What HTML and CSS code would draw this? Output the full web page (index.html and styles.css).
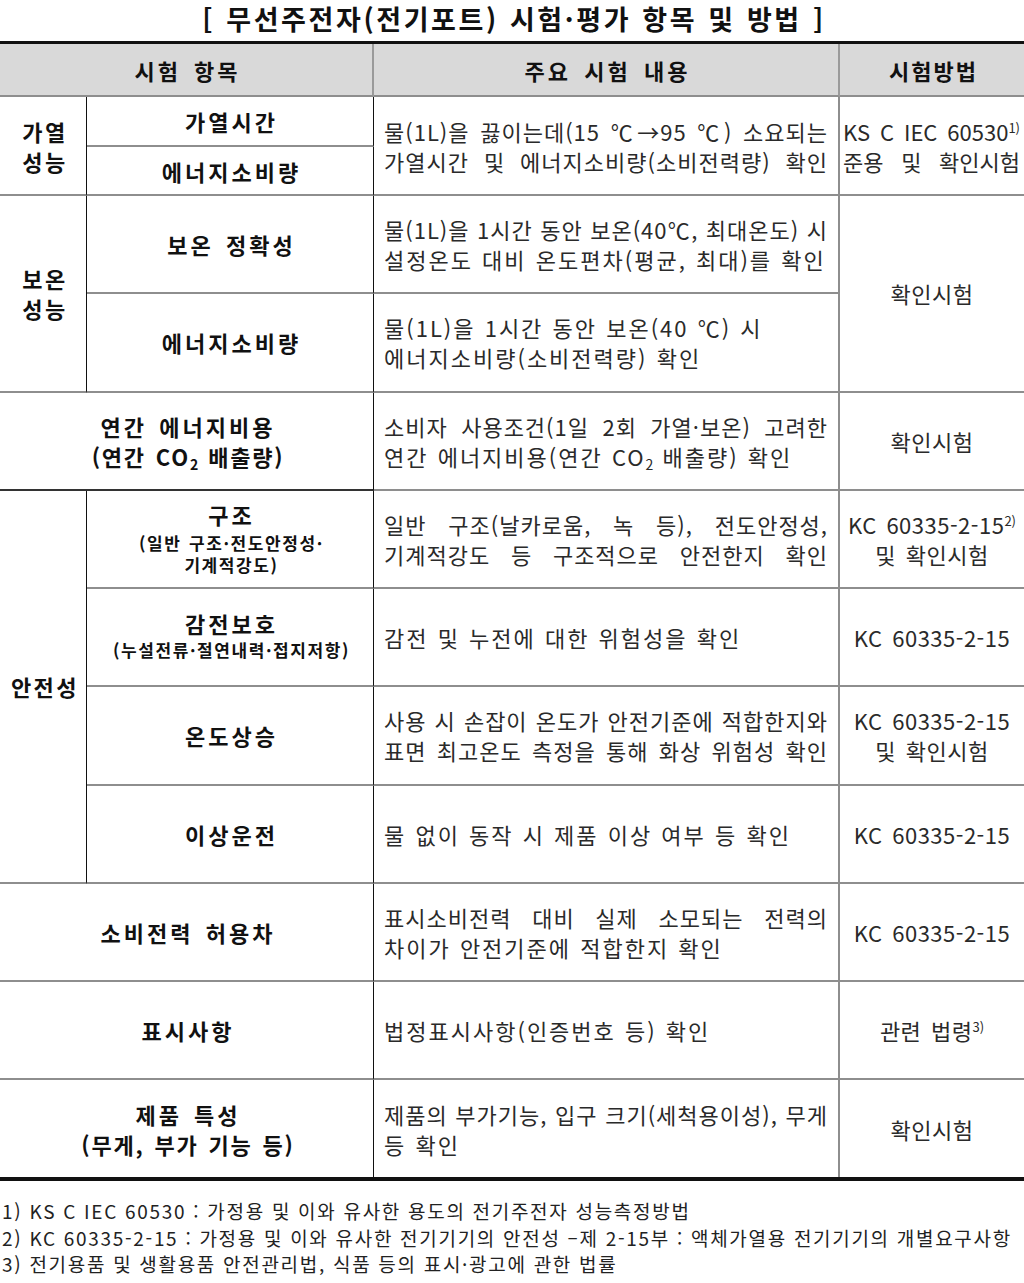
FILE: index.html
```html
<!DOCTYPE html>
<html lang="ko">
<head>
<meta charset="utf-8">
<title>무선주전자 시험·평가 항목 및 방법</title>
<link rel="stylesheet" href="styles.css">
</head>
<body>
<h1 class="title">[ 무선주전자(전기포트) 시험·평가 항목 및 방법 ]</h1>
<table class="tbl">
  <colgroup>
    <col class="c1"><col class="c2"><col class="c3"><col class="c4">
  </colgroup>
  <thead>
    <tr class="hrow">
      <th colspan="2" class="h-item">시험 항목</th>
      <th class="h-desc">주요 시험 내용</th>
      <th class="h-meth">시험방법</th>
    </tr>
  </thead>
  <tbody>
    <tr class="r-half1">
      <td rowspan="2" class="cat">가열<br>성능</td>
      <td class="item">가열시간</td>
      <td rowspan="2" class="desc"><span class="jl">물(1L)을 끓이는데(15 ℃→95 ℃) 소요되는</span><span class="jl">가열시간 및 에너지소비량(소비전력량) 확인</span></td>
      <td rowspan="2" class="meth left"><span class="jl">KS C IEC 60530<sup>1)</sup></span><span class="jl">준용 및 확인시험</span></td>
    </tr>
    <tr class="r-half2">
      <td class="item">에너지소비량</td>
    </tr>
    <tr class="r-full">
      <td rowspan="2" class="cat">보온<br>성능</td>
      <td class="item">보온 정확성</td>
      <td class="desc"><span class="jl">물(1L)을 1시간 동안 보온(40℃, 최대온도) 시</span>설정온도 대비 온도편차(평균, 최대)를 확인</td>
      <td rowspan="2" class="meth">확인시험</td>
    </tr>
    <tr class="r-full">
      <td class="item">에너지소비량</td>
      <td class="desc">물(1L)을 1시간 동안 보온(40 ℃) 시<br>에너지소비량(소비전력량) 확인</td>
    </tr>
    <tr class="r-full">
      <td colspan="2" class="item wide dark-bottom">연간 에너지비용<br><span class="paren">(연간 CO<sub>2</sub> 배출량)</span></td>
      <td class="desc"><span class="jl">소비자 사용조건(1일 2회 가열·보온) 고려한</span>연간 에너지비용(연간 CO<sub>2</sub> 배출량) 확인</td>
      <td class="meth">확인시험</td>
    </tr>
    <tr class="r-full">
      <td rowspan="4" class="cat">안전성</td>
      <td class="item stack s-two"><span class="main m-gap">구조</span><span class="sub">(일반 구조·전도안정성·</span><span class="sub">기계적강도)</span></td>
      <td class="desc"><span class="jl">일반 구조(날카로움, 녹 등), 전도안정성,</span><span class="jl">기계적강도 등 구조적으로 안전한지 확인</span></td>
      <td class="meth">KC 60335-2-15<sup>2)</sup><br>및 확인시험</td>
    </tr>
    <tr class="r-full">
      <td class="item stack"><span class="main">감전보호</span><span class="sub">(누설전류·절연내력·접지저항)</span></td>
      <td class="desc">감전 및 누전에 대한 위험성을 확인</td>
      <td class="meth">KC 60335-2-15</td>
    </tr>
    <tr class="r-full">
      <td class="item">온도상승</td>
      <td class="desc"><span class="jl">사용 시 손잡이 온도가 안전기준에 적합한지와</span><span class="jl">표면 최고온도 측정을 통해 화상 위험성 확인</span></td>
      <td class="meth">KC 60335-2-15<br>및 확인시험</td>
    </tr>
    <tr class="r-full">
      <td class="item">이상운전</td>
      <td class="desc">물 없이 동작 시 제품 이상 여부 등 확인</td>
      <td class="meth">KC 60335-2-15</td>
    </tr>
    <tr class="r-full">
      <td colspan="2" class="item wide">소비전력 허용차</td>
      <td class="desc"><span class="jl">표시소비전력 대비 실제 소모되는 전력의</span>차이가 안전기준에 적합한지 확인</td>
      <td class="meth">KC 60335-2-15</td>
    </tr>
    <tr class="r-full">
      <td colspan="2" class="item wide">표시사항</td>
      <td class="desc">법정표시사항(인증번호 등) 확인</td>
      <td class="meth">관련 법령<sup>3)</sup></td>
    </tr>
    <tr class="r-last">
      <td colspan="2" class="item wide">제품 특성<br><span class="paren">(무게, 부가 기능 등)</span></td>
      <td class="desc"><span class="jl">제품의 부가기능, 입구 크기(세척용이성), 무게</span>등 확인</td>
      <td class="meth">확인시험</td>
    </tr>
  </tbody>
</table>
<ol class="notes">
  <li>1) KS C IEC 60530 : 가정용 및 이와 유사한 용도의 전기주전자 성능측정방법</li>
  <li>2) KC 60335-2-15 : 가정용 및 이와 유사한 전기기기의 안전성 –제 2-15부 : 액체가열용 전기기기의 개별요구사항</li>
  <li>3) 전기용품 및 생활용품 안전관리법, 식품 등의 표시·광고에 관한 법률</li>
</ol>
</body>
</html>
```
FILE: styles.css
```css
html, body {
  margin: 0;
  padding: 0;
  background: #ffffff;
}
body {
  width: 1024px;
  font-family: "Noto Sans CJK KR", "Noto Sans", sans-serif;
  color: #222;
}
.title {
  margin: 0;
  height: 41px;
  line-height: 37px;
  font-size: 27px;
  font-weight: 700;
  letter-spacing: 2.6px;
  word-spacing: 1px;
  text-align: center;
  color: #111;
  padding-left: 4px;
}
.tbl {
  width: 1024px;
  table-layout: fixed;
  border-collapse: separate;
  border-spacing: 0;
  border-top: 3px solid #111;
  border-bottom: 4px solid #111;
}
.c1 { width: 87px; }
.c2 { width: 287px; }
.c3 { width: 466px; }
.c4 { width: 184px; }

.tbl th, .tbl td {
  padding: 0;
  vertical-align: middle;
  text-align: center;
  border-bottom: 2px solid #8e8e8e;
  box-sizing: border-box;
}
.tbl tr.r-last td { border-bottom: none; }

.hrow { height: 53px; }
.hrow th {
  background: #d9d9d9;
  font-size: 22px;
  font-weight: 700;
  letter-spacing: 3px;
  word-spacing: 4px;
  color: #111;
  padding-left: 3px;
  border-right: 2px solid #9a9a9a;
}
.hrow th.h-meth { border-right: none; letter-spacing: 2px; }

.r-half1 { height: 50px; }
.r-half2 { height: 49px; }
.r-full { height: 98.25px; }
.r-last { height: 97px; }

.tbl td.cat {
  font-size: 22px;
  font-weight: 700;
  line-height: 30px;
  letter-spacing: 2.5px;
  padding-left: 4px;
  color: #111;
  border-right: 1px solid #111;
}
.tbl td.item {
  font-size: 22px;
  font-weight: 700;
  line-height: 30px;
  letter-spacing: 3px;
  word-spacing: 3px;
  padding-left: 3px;
  color: #111;
  border-right: 1px solid #111;
}
.item .paren {
  letter-spacing: 1.8px;
  word-spacing: 2px;
}
.tbl td.item.dark-bottom { border-bottom: 2px solid #333; }
.tbl td.item.stack { padding-bottom: 4px; }
.tbl td.item.stack.s-two { padding-bottom: 2px; }
.item .main {
  display: block;
  line-height: 28px;
  margin-bottom: 2px;
}
.item .main.m-gap { margin-bottom: 4px; }
.item .sub {
  display: block;
  font-size: 17px;
  line-height: 22px;
  letter-spacing: 1.6px;
  word-spacing: 1px;
}
.tbl td.desc {
  text-align: left;
  padding: 0 10px 0 10px;
  font-size: 22px;
  line-height: 30px;
  letter-spacing: 2px;
  word-spacing: 1px;
  color: #2a2a2a;
  border-right: 2px solid #8e8e8e;
}
.jl {
  display: block;
  white-space: nowrap;
  text-align: justify;
  text-align-last: justify;
}
.tbl td.desc .jl {
  letter-spacing: 1px;
  word-spacing: 0;
}
.tbl td.meth {
  font-size: 22px;
  line-height: 30px;
  letter-spacing: 0.5px;
  word-spacing: 3px;
  color: #2a2a2a;
}
.tbl td.meth.left {
  text-align: left;
  padding: 0 4px 0 3px;
  letter-spacing: 0;
  word-spacing: 0;
}
sup {
  font-size: 13px;
  line-height: 0;
  vertical-align: 8px;
  letter-spacing: 0;
}
sub {
  font-size: 14px;
  line-height: 0;
  vertical-align: -4px;
  letter-spacing: 0;
}
.notes {
  list-style: none;
  margin: 17px 0 0 0;
  padding: 0 0 0 2px;
  font-size: 19px;
  line-height: 26.5px;
  letter-spacing: 1.7px;
  color: #222;
}
.notes li { margin: 0; white-space: nowrap; }
```
